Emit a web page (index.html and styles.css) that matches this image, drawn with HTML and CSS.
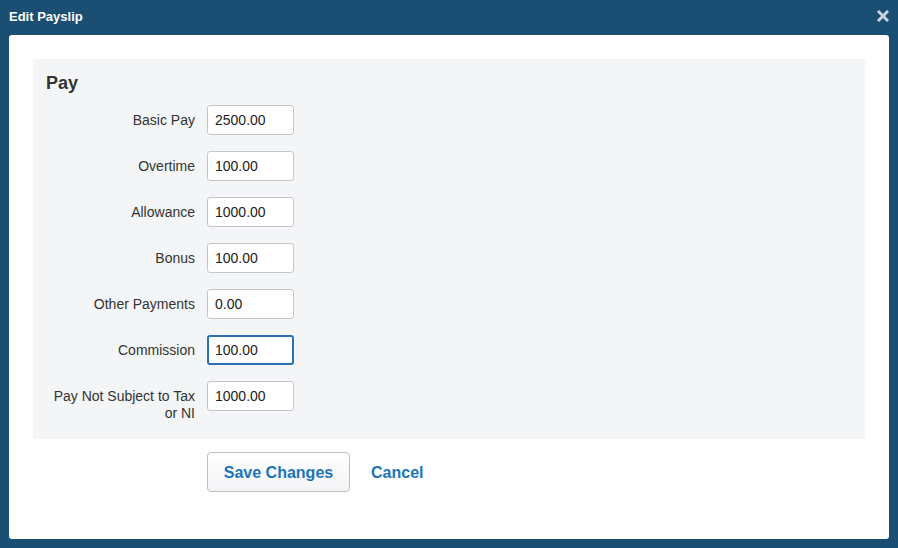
FILE: index.html
```html
<!DOCTYPE html>
<html>
<head>
<meta charset="utf-8">
<link rel="stylesheet" href="styles.css">
</head>
<body>
<div class="dialog">
  <div class="titlebar">
    <span class="title">Edit Payslip</span>
    <span class="close" aria-label="Close">
      <svg width="12" height="12" viewBox="0 0 12 12"><path d="M2 2 L10 10 M10 2 L2 10" stroke="#c9d3dc" stroke-width="3" stroke-linecap="square"/></svg>
    </span>
  </div>
  <div class="panel">
    <div class="section">
      <h2 class="heading">Pay</h2>
      <div class="rows">
        <div class="row"><label class="label">Basic Pay</label><input class="field" value="2500.00"></div>
        <div class="row"><label class="label">Overtime</label><input class="field" value="100.00"></div>
        <div class="row"><label class="label">Allowance</label><input class="field" value="1000.00"></div>
        <div class="row"><label class="label">Bonus</label><input class="field" value="100.00"></div>
        <div class="row"><label class="label">Other Payments</label><input class="field" value="0.00"></div>
        <div class="row"><label class="label">Commission</label><input class="field focused" value="100.00"></div>
        <div class="row"><label class="label">Pay Not Subject to Tax or NI</label><input class="field" value="1000.00"></div>
      </div>
    </div>
    <div class="actions">
      <button class="btn">Save Changes</button>
      <a class="cancel">Cancel</a>
    </div>
  </div>
</div>
</body>
</html>
```
FILE: styles.css
```css
html, body {
  margin: 0;
  padding: 0;
}
body {
  background: #1a4f73;
  font-family: "Liberation Sans", Arial, Helvetica, sans-serif;
  width: 898px;
  height: 548px;
  overflow: hidden;
}
.dialog {
  display: flex;
  flex-direction: column;
  height: 548px;
}
.titlebar {
  height: 35px;
  display: flex;
  align-items: center;
  justify-content: space-between;
  padding: 0 9px 0 9px;
  box-sizing: border-box;
}
.title {
  color: #ffffff;
  font-weight: bold;
  font-size: 13px;
  margin-top: -2px;
}
.close {
  display: flex;
  margin-top: -3px;
  margin-right: 0;
}
.panel {
  background: #ffffff;
  margin: 0 9px;
  height: 504px;
  border-radius: 3px;
  padding: 24px;
  box-sizing: border-box;
}
.section {
  background: #f4f5f7;
  padding: 13px 13px 17px 13px;
  border-radius: 2px;
}
.heading {
  margin: 0 0 11px 0;
  font-size: 18px;
  line-height: 22px;
  font-weight: bold;
  color: #333333;
}
.rows {
  display: flex;
  flex-direction: column;
  gap: 16px;
}
.row {
  display: flex;
  align-items: flex-start;
  gap: 12px;
}
.label {
  width: 149px;
  text-align: right;
  font-size: 14px;
  line-height: 17px;
  padding-top: 7px;
  color: #333333;
}
.field {
  width: 87px;
  height: 30px;
  box-sizing: border-box;
  border: 1px solid #c3c7cc;
  border-radius: 3px;
  padding: 0 7px;
  font-family: "Liberation Sans", Arial, sans-serif;
  font-size: 14px;
  color: #222222;
  background: #ffffff;
  outline: none;
  margin: 0;
}
.field.focused {
  border: 2px solid #2a72b5;
  padding: 0 6px;
}
.actions {
  display: flex;
  align-items: center;
  gap: 21px;
  margin-top: 13px;
  padding-left: 174px;
}
.btn {
  width: 143px;
  height: 40px;
  border: 1px solid #b9bfc5;
  border-radius: 4px;
  background: linear-gradient(#ffffff, #f3f4f6);
  color: #1b75bb;
  font-family: "Liberation Sans", Arial, sans-serif;
  font-weight: bold;
  font-size: 16px;
  padding: 2px 0 0 0;
  margin: 0;
}
.cancel {
  color: #1b75bb;
  font-weight: bold;
  font-size: 16px;
  padding-top: 2px;
}
```
